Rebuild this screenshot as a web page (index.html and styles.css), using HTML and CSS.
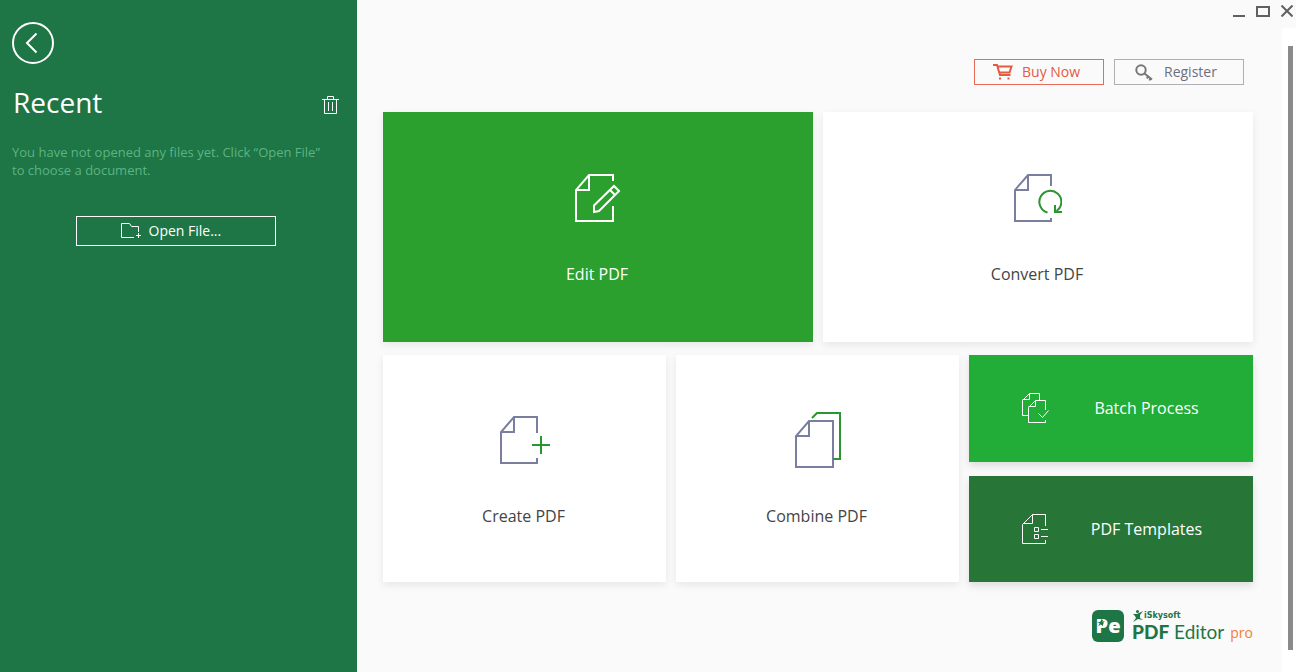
FILE: index.html
```html
<!DOCTYPE html>
<html lang="en">
	<head>
		<meta charset="utf-8" />
		<title>iSkysoft PDF Editor</title>
		<link rel="stylesheet" href="styles.css">
	</head>
	<body>
		<aside class="sidebar">
			<button type="button" class="back" aria-label="Back">
				<svg width="42" height="42" viewBox="0 0 42 42"><circle cx="21" cy="21" r="20"/><path d="M24.500 11.500L15 21l9.500 9.500"/></svg>
			</button>
			<div class="recent-head">
				<h1>Recent</h1>
				<button type="button" class="clear" aria-label="Clear recent files">
					<svg width="17" height="18" viewBox="0 0 17 18"><path d="M0 3.500h17M5.500 3.500v-3h6v3M2.500 3.500v14h12v-14M6.500 6v9M10.500 6v9"/></svg>
				</button>
			</div>
			<p class="hint">You have not opened any files yet. Click “Open File” to choose a document.</p>
			<button type="button" class="open-file">
				<svg width="20" height="16" viewBox="0 0 20 16"><path d="M13 14.500H.5V.5h8l2 3h7V9M17.500 10v5M15 12.500h5"/></svg>
				<span>Open File...</span>
			</button>
		</aside>

		<div class="window">
			<header class="titlebar">
				<button type="button" aria-label="Minimize"><svg width="12" height="12" viewBox="0 0 12 12"><path d="M0 11h12"/></svg></button>
				<button type="button" aria-label="Maximize"><svg width="14" height="12" viewBox="0 0 14 12"><path d="M1 2h12v9H1z"/></svg></button>
				<button type="button" aria-label="Close"><svg width="12" height="12" viewBox="0 0 12 12"><path d="M.5.5l11 11M11.500.5l-11 11"/></svg></button>
			</header>

			<div class="body">
				<main class="content">
					<div class="actions">
						<button type="button" class="action buy">
							<svg width="20" height="16" viewBox="0 0 20 16"><path d="M0 1h4l3 10h10.500M4.500 2.500h14l-2 6H6.500" fill="none" stroke="currentColor" stroke-width="2"/><path d="M6 13.500h2v2H6zM14.500 13.500h2v2h-2z" fill="currentColor"/></svg>
							<span>Buy Now</span>
						</button>
						<button type="button" class="action register">
							<svg width="18" height="17" viewBox="0 0 18 17"><circle cx="6" cy="6" r="4.700" fill="none" stroke="currentColor" stroke-width="2"/><path d="M9.500 9.500L17 15.500M13 12.500l-1 2M15.500 14l-1 2.500" fill="none" stroke="currentColor" stroke-width="2"/></svg>
							<span>Register</span>
						</button>
					</div>

					<div class="row top">
						<button type="button" class="tile edit">
							<svg width="46" height="48" viewBox="0 0 46 48">
								<path class="page" d="M38 7V1H14L1 16v31h37V32M14 1v15H1"/>
								<path class="page" d="M19 38v-6.500L39 12l5 5-20 20zM35 16l5 5"/>
							</svg>
							<span>Edit PDF</span>
						</button>
						<button type="button" class="tile">
							<svg width="48" height="48" viewBox="0 0 48 48">
								<path class="page" d="M37 12V1H14L1 16v31h36v-3M14 1v15H1"/>
								<path class="mark" d="M33.500 38.500A11 11 0 1 1 42.500 37M41 31v7h7"/>
							</svg>
							<span>Convert PDF</span>
						</button>
					</div>

					<div class="row bottom">
						<button type="button" class="tile">
							<svg width="50" height="56" viewBox="0 -4 50 56">
								<path class="page" d="M37 17V1H14L1 16v31h36v-5M14 1v15H1"/>
								<path class="mark" d="M41 20v18M32 29h18"/>
							</svg>
							<span>Create PDF</span>
						</button>
						<button type="button" class="tile">
							<svg width="46" height="56" viewBox="0 0 46 56">
								<path class="page" d="M14 9h24v46H1V24zM14 9v15H1"/>
								<path class="mark" d="M17 6l5-5h23v46h-7"/>
							</svg>
							<span>Combine PDF</span>
						</button>
						<div class="stack">
							<button type="button" class="strip batch">
								<svg width="27" height="30" viewBox="0 0 27 30"><path d="M17.500 7V.5H7.500l-7 7v15h6M7.500.5v6h-7M23.500 17V7.500h-10l-7 7v15h17V27M13.500 7.500v6h-7M16.500 20.500l4 4 6-7"/></svg>
								<span>Batch Process</span>
							</button>
							<button type="button" class="strip templates">
								<svg width="27" height="30" viewBox="0 0 27 30"><path d="M23.500 12V.5H10.500l-10 10v19h23V26M10.500.5v9H1M12.500 13.500h4v4h-4zM12.500 20.500h4v4h-4zM19 15.500h7M19 22.500h7"/></svg>
								<span>PDF Templates</span>
							</button>
						</div>
					</div>

					<footer class="brand">
						<span class="badge">Pe<svg width="8" height="8" viewBox="0 0 12 12"><path d="M7 0l2 2-1 2 4-1-3 3 0 5-3-3-4 3 2-5-4-1 5-1z"/></svg></span>
						<span class="names">
							<span class="maker"><svg width="12" height="12" viewBox="0 0 12 12"><circle cx="5.500" cy="1.500" r="1.500"/><path d="M1 4l4 0 6-3-3 4 0 3 3 2-5-1-5 3 3-4-1-2z"/></svg>iSkysoft</span>
							<span class="product"><b>PDF</b> Editor</span>
						</span>
						<span class="pro">pro</span>
					</footer>
				</main>
				<div class="scrollbar"><div class="thumb"></div></div>
			</div>
		</div>
	</body>
</html>
```
FILE: styles.css
```css
* {
	box-sizing: border-box;
}
body {
	display: flex;
	min-height: 100vh;
	margin: 0;
	background: #fafafa;
	font-family: "Open Sans", "Noto Sans", sans-serif;
	font-size: 14px;
}
button {
	padding: 0;
	border: 0;
	background: none;
	color: inherit;
	font: inherit;
	cursor: pointer;
}
svg {
	display: block;
	flex: none;
}

/* sidebar */
.sidebar {
	flex: 0 0 357px;
	padding: 22px 18px 0 12px;
	background: #1e7545;
	color: #fff;
}
.sidebar svg {
	fill: none;
	stroke: #fff;
}
.back {
	display: block;
}
.back svg {
	stroke-width: 2;
}
.recent-head {
	display: flex;
	align-items: flex-end;
	justify-content: space-between;
	margin-top: 18px;
	padding-left: 1px;
}
.recent-head h1 {
	margin: 0;
	font-size: 28px;
	font-weight: 400;
	line-height: 40px;
}
.clear {
	margin-bottom: 8px;
}
.hint {
	margin: 21px 0 37px;
	padding-right: 16px;
	color: #5cb483;
	font-size: 13px;
	line-height: 18px;
}
.open-file {
	display: flex;
	align-items: center;
	gap: 8px;
	width: 200px;
	height: 30px;
	margin: 0 auto;
	padding-left: 44px;
	border: 1px solid #fff;
}
.open-file span,
.action span {
	padding-bottom: 2px;
}

/* window frame */
.window {
	display: flex;
	flex: 1;
	flex-direction: column;
}
.titlebar {
	display: flex;
	justify-content: flex-end;
	gap: 11px;
	height: 28px;
	padding: 5px 3px 0 0;
}
.titlebar button {
	height: 12px;
}
.titlebar svg {
	fill: none;
	stroke: #606060;
	stroke-width: 2;
}
.body {
	display: flex;
	flex: 1;
}
.scrollbar {
	display: flex;
	flex: 0 0 14px;
	padding: 18px 3px 22px 6px;
	background: #fff;
}
.thumb {
	flex: 1;
	background: #8a8a8a;
}

/* content */
.content {
	flex: 1;
	padding: 31px 29px 0 26px;
}
.actions {
	display: flex;
	justify-content: flex-end;
	gap: 10px;
	margin-bottom: 27px;
	padding-right: 9px;
}
.action {
	display: flex;
	align-items: center;
	width: 130px;
	height: 26px;
	border: 1px solid;
}
.buy {
	gap: 9px;
	padding-left: 18px;
	border-color: #e96a55;
	color: #e35b41;
}
.register {
	gap: 11px;
	padding-left: 20px;
	border-color: #b0b0b0;
	color: #777;
}
.register span {
	color: #6c6f7f;
}
.row {
	display: grid;
	gap: 10px;
}
.top {
	grid-template-columns: 1fr 1fr;
	margin-bottom: 13px;
}
.bottom {
	grid-template-columns: 1fr 1fr 284px;
}
.tile {
	display: flex;
	flex-direction: column;
	align-items: center;
	justify-content: center;
	gap: 40px;
	height: 230px;
	padding: 6px 2px 0 0;
	background: #fff;
	box-shadow: 0 3px 8px rgba(0, 0, 0, 0.08);
	color: #444;
	font-size: 16px;
	line-height: 24px;
}
.bottom .tile {
	gap: 36px;
	height: 227px;
	padding: 2px 2px 0 0;
}
.tile svg {
	margin-left: 2px;
	fill: none;
	stroke-width: 2;
}
.page {
	stroke: #7a7f9f;
}
.mark {
	stroke: #2a962f;
}
.edit {
	background: #2ba02e;
	color: #fff;
}
.edit .page {
	stroke: #fff;
}
.stack {
	display: flex;
	flex-direction: column;
	gap: 14px;
}
.strip {
	display: flex;
	flex: 1;
	align-items: center;
	padding: 0 9px 0 53px;
	box-shadow: 0 4px 8px rgba(0, 0, 0, 0.12);
	color: #fff;
	font-size: 16px;
}
.strip svg {
	fill: none;
	stroke: #fff;
}
.strip span {
	flex: 1;
}
.batch {
	background: #21ad37;
}
.templates {
	background: #287637;
}

/* brand */
.brand {
	display: flex;
	align-items: flex-end;
	justify-content: flex-end;
	margin-top: 28px;
	color: #1e7545;
}
.badge {
	position: relative;
	width: 32px;
	height: 32px;
	margin-right: 8px;
	border-radius: 6px;
	background: #1e7545;
	color: #fff;
	font-size: 20px;
	font-weight: 800;
	line-height: 32px;
	text-align: center;
}
.badge svg {
	position: absolute;
	top: 9px;
	left: 5px;
	fill: #1e7545;
}
.names {
	display: flex;
	flex-direction: column;
}
.maker {
	display: flex;
	align-items: center;
	font-family: "DejaVu Sans", sans-serif;
	font-size: 8px;
	font-weight: 700;
	line-height: 12px;
}
.maker svg {
	fill: #1e7545;
}
.product {
	font-family: Lato, sans-serif;
	font-size: 19px;
	line-height: 20px;
}
.product b {
	font-weight: 900;
}
.pro {
	margin-left: 6px;
	color: #f08030;
	font-size: 14px;
	line-height: 18px;
}
```
